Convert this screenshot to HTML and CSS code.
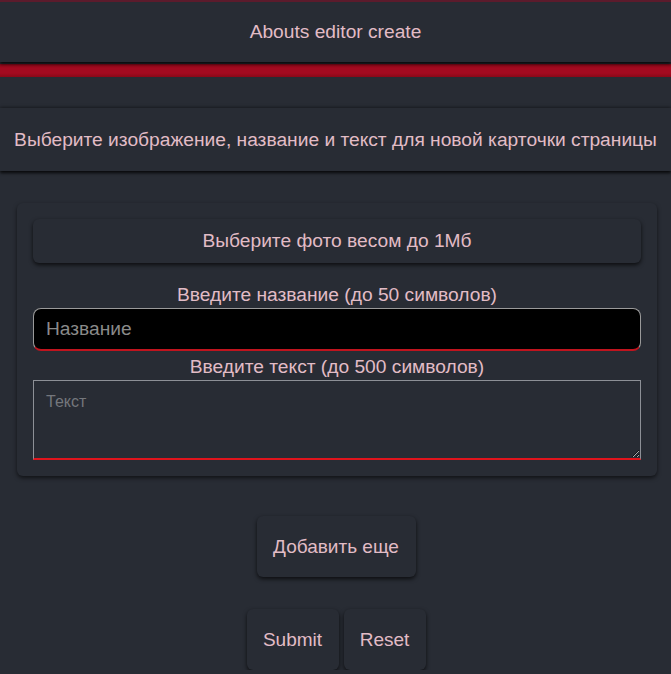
FILE: index.html
```html
<!DOCTYPE html>
<html lang="ru">
<head>
<meta charset="utf-8">
<title>Abouts editor create</title>
<link rel="stylesheet" href="styles.css">
</head>
<body>
<header class="topbar">Abouts editor create</header>
<div class="redband"></div>
<div class="subtitle">Выберите изображение, название и текст для новой карточки страницы</div>
<form class="card">
  <button type="button" class="file-btn">Выберите фото весом до 1Мб</button>
  <label class="label" for="name">Введите название (до 50 символов)</label>
  <input id="name" class="name-input" type="text" placeholder="Название">
  <label class="label" for="text">Введите текст (до 500 символов)</label>
  <textarea id="text" class="text-input" placeholder="Текст"></textarea>
</form>
<div class="more-row"><button type="button" class="btn btn-more">Добавить еще</button></div>
<div class="actions">
  <button type="button" class="btn btn-submit">Submit</button>
  <button type="button" class="btn btn-reset">Reset</button>
</div>
</body>
</html>
```
FILE: styles.css
```css
html, body {
  margin: 0;
  padding: 0;
  background: #282c34;
  color: #e2bcc6;
  font-family: "Liberation Sans", Arial, sans-serif;
  font-size: 19.2px;
}
.topbar {
  border-top: 2px solid #5c1b2c;
  height: 60px;
  display: flex;
  align-items: center;
  justify-content: center;
  box-shadow: 0 2px 3px rgba(0,0,0,0.8);
  position: relative;
}
.redband {
  margin-top: 2px;
  height: 13px;
  background: linear-gradient(#8a0818, #a30a20 30%, #a30a20 70%, #8a0818);
}
.subtitle {
  margin-top: 31px;
  height: 63px;
  display: flex;
  align-items: center;
  justify-content: center;
  white-space: nowrap;
  box-shadow: 0 -1px 3px rgba(0,0,0,0.35), 0 2px 3px rgba(0,0,0,0.8);
}
.card {
  margin: 32px 0 0 17px;
  width: 640px;
  box-sizing: border-box;
  padding: 16px;
  border-radius: 6px;
  box-shadow: 0 2px 4px rgba(0,0,0,0.6);
  display: flex;
  flex-direction: column;
  align-items: stretch;
}
.file-btn {
  height: 44px;
  border: none;
  border-radius: 6px;
  background: #282c34;
  color: #e2bcc6;
  font-family: "Liberation Sans", Arial, sans-serif;
  font-size: 19.2px;
  box-shadow: 0 2px 4px rgba(0,0,0,0.7);
  margin-bottom: 20px;
}
.label {
  text-align: center;
  font-size: 19.2px;
  line-height: 23px;
  margin-bottom: 2px;
}
.name-input {
  height: 43px;
  box-sizing: border-box;
  background: #000;
  border: 1px solid #9a9a9a;
  border-bottom: 2px solid #c0141e;
  border-radius: 8px;
  color: #ddd;
  font-family: "Liberation Sans", Arial, sans-serif;
  font-size: 19.2px;
  padding: 0 12px;
  margin-bottom: 4px;
  outline: none;
}
.name-input::placeholder { color: #8a8a8a; }
.text-input {
  height: 80px;
  box-sizing: border-box;
  background: #282c34;
  border: 1px solid #8d9096;
  border-bottom: 2px solid #e0141c;
  border-radius: 0;
  color: #ddd;
  font-family: "Liberation Sans", Arial, sans-serif;
  font-size: 16px;
  padding: 12px;
  resize: vertical;
  outline: none;
}
.text-input::placeholder { color: #74777c; }
.more-row {
  display: flex;
  justify-content: center;
  margin-top: 40px;
  padding-left: 1px;
}
.btn {
  height: 61px;
  border: none;
  border-radius: 6px;
  background: #282c34;
  color: #e2bcc6;
  font-family: "Liberation Sans", Arial, sans-serif;
  font-size: 19px;
  white-space: nowrap;
  box-shadow: 0 2px 4px rgba(0,0,0,0.7);
  padding: 0 12px;
}
.btn-more { width: 159px; }
.actions {
  display: flex;
  justify-content: center;
  gap: 5px;
  margin-top: 32px;
  padding-left: 1px;
}
.btn-submit { width: 92px; }
.btn-reset { width: 82px; }
```
